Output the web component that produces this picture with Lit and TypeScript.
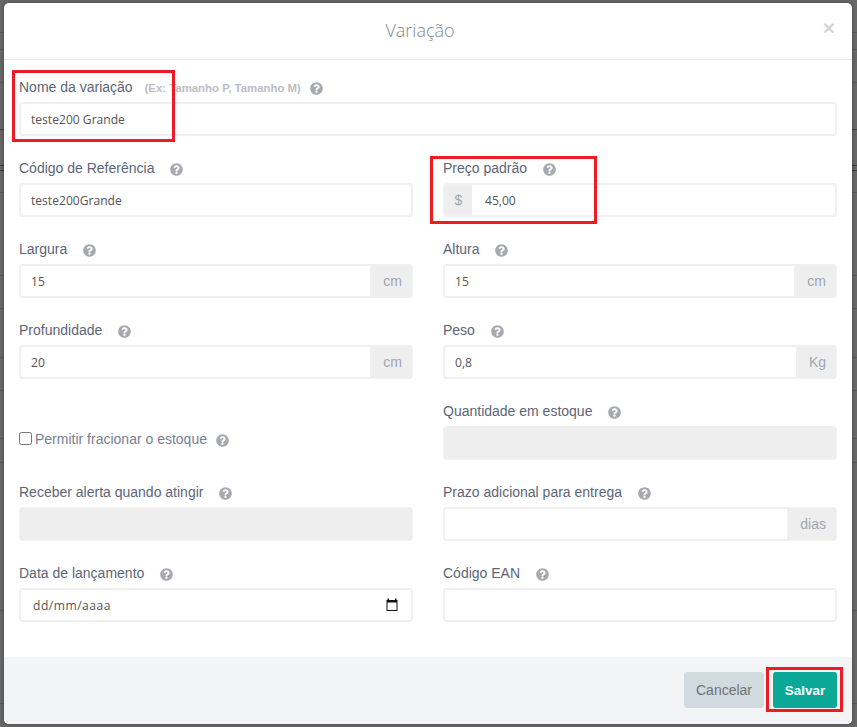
import { LitElement, css, html, svg } from "lit";
import { customElement } from "lit/decorators.js";

const help = html`<svg class="help" viewBox="0 0 512 512">
	${svg`<path fill="currentColor" d="M504 256c0 136.997-111.043 248-248 248S8 392.997 8 256C8 119.083 119.043 8 256 8s248 111.083 248 248zM262.655 90c-54.497 0-89.255 22.957-116.549 63.758-3.536 5.286-2.353 12.415 2.715 16.258l34.699 26.31c5.205 3.947 12.621 3.008 16.665-2.122 17.864-22.658 30.113-35.797 57.303-35.797 20.429 0 45.698 13.148 45.698 32.958 0 14.976-12.363 22.667-32.534 33.976C247.128 238.528 216 254.941 216 296v4c0 6.627 5.373 12 12 12h56c6.627 0 12-5.373 12-12v-1.333c0-28.462 83.186-29.647 83.186-106.667 0-58.002-60.165-102-116.531-102zM256 338c-25.365 0-46 20.635-46 46 0 25.364 20.635 46 46 46s46-20.636 46-46c0-25.365-20.635-46-46-46z"/>`}
</svg>`;

// rows of the page behind the modal, they show in the strips at both sides
const pageLines = [32, 49, 82, 192, 275, 308, 357, 390, 438, 462, 610, 703];
const pageDarkLines = [129, 165, 170];

const layer = (color: string, y: number) => `linear-gradient(${color}, ${color}) 0 ${y}px / 100% 1px no-repeat`;
const backdropBackground = [
	...pageLines.map(y => layer("#595959", y)),
	...pageDarkLines.map(y => layer("#404040", y)),
].join(", ");

@customElement("app-root")
export class AppRoot extends LitElement {

	field(label: string, value: string, opts: { suffix?: string, prefix?: string, disabled?: boolean } = {}) {
		return html`
			<div class="field">
				<label>${label} ${help}</label>
				<div class="group">
					${opts.prefix ? html`<span class="addon left">${opts.prefix}</span>` : ""}
					<input class="control" .value=${value} ?disabled=${opts.disabled} />
					${opts.suffix ? html`<span class="addon right">${opts.suffix}</span>` : ""}
				</div>
			</div>
		`
	}

	render() {
		return html`
			<div class="backdrop" style="background: ${backdropBackground}, #686868">
				<div class="modal">
					<header>
						<h4>Variação</h4>
						<span class="close">×</span>
					</header>
					<div class="body">
						<div class="field full">
							<label>Nome da variação <small>(Ex: Tamanho P, Tamanho M)</small> ${help}</label>
							<div class="group"><input class="control" value="teste200 Grande" /></div>
						</div>
						${this.field("Código de Referência", "teste200Grande")}
						${this.field("Preço padrão", "45,00", { prefix: "$" })}
						${this.field("Largura", "15", { suffix: "cm" })}
						${this.field("Altura", "15", { suffix: "cm" })}
						${this.field("Profundidade", "20", { suffix: "cm" })}
						${this.field("Peso", "0,8", { suffix: "Kg" })}
						<div class="check">
							<input type="checkbox" />
							<span>Permitir fracionar o estoque</span>
							${help}
						</div>
						${this.field("Quantidade em estoque", "", { disabled: true })}
						${this.field("Receber alerta quando atingir", "", { disabled: true })}
						${this.field("Prazo adicional para entrega", "", { suffix: "dias" })}
						<div class="field">
							<label>Data de lançamento ${help}</label>
							<div class="control date">
								<span>dd/mm/aaaa</span>
								<svg viewBox="0 0 14 14" width="14" height="14">
									<path fill="#111" d="M2.5 0.5h1.5v1.5h6v-1.5h1.5v1.5h1v11h-11v-11h1zM2.5 4.5v7.5h9v-7.5z" />
								</svg>
							</div>
						</div>
						${this.field("Código EAN", "")}
					</div>
					<footer>
						<button class="cancel">Cancelar</button>
						<button class="save">Salvar</button>
					</footer>
				</div>
				<div class="mark one"></div>
				<div class="mark two"></div>
				<div class="mark three"></div>
			</div>
		`
	}

	static styles = css`
		:host {
			display: block;
			font-family: "Liberation Sans", Arial, sans-serif;
		}
		* {
			box-sizing: border-box;
		}
		.backdrop {
			position: relative;
			width: 857px;
			height: 727px;
			overflow: hidden;
			padding: 3px 5px 3px 4px;
		}
		.modal {
			height: 721px;
			background-color: #fff;
			border-radius: 5px;
			overflow: hidden;
			display: flex;
			flex-direction: column;
			box-shadow: 0 0 4px rgba(0, 0, 0, 0.35);
		}
		header {
			position: relative;
			height: 57px;
			flex: none;
			border-bottom: 1px solid #e7e7e7;
			display: flex;
			align-items: center;
			justify-content: center;
			padding: 0 16px 2px 0;
		}
		h4 {
			margin: 0;
			font: 300 18px "Open Sans", sans-serif;
			color: #85888a;
		}
		.close {
			position: absolute;
			right: 17px;
			top: 13px;
			font: 700 21px "Liberation Sans", Arial, sans-serif;
			color: #d4d4d4;
		}
		.body {
			flex: 1;
			display: grid;
			grid-template-columns: 394px 394px;
			column-gap: 30px;
			grid-auto-rows: 81px;
			padding: 17px 15px 0;
		}
		.full {
			grid-column: 1 / -1;
		}
		.field {
			display: flex;
			flex-direction: column;
			height: 60px;
		}
		label {
			height: 25px;
			flex: none;
			font-size: 14px;
			line-height: 20px;
			color: #5c6577;
			white-space: nowrap;
		}
		small {
			font-size: 11.4px;
			font-weight: 700;
			color: #bbbdc4;
			margin-left: 8px;
		}
		.help {
			width: 13px;
			height: 13px;
			margin-left: 12px;
			vertical-align: -3px;
			color: #a7a9b1;
		}
		small + .help {
			margin-left: 5px;
		}
		.group {
			display: flex;
			height: 34px;
		}
		.control {
			flex: 1;
			min-width: 0;
			width: 100%;
			height: 34px;
			padding: 0 10px;
			border: 2px solid #eef0f1;
			border-radius: 4px;
			background-color: #fff;
			font: 12.1px "Open Sans", sans-serif;
			color: #555;
			outline: none;
		}
		.control:disabled {
			background-color: #eee;
		}
		.addon {
			flex: none;
			display: flex;
			align-items: center;
			justify-content: center;
			background-color: #eee;
			border: 2px solid #eef0f1;
			font-size: 14px;
			color: #a0a6b2;
		}
		.addon.left {
			width: 29px;
			border-radius: 4px 0 0 4px;
			border-right: 0;
		}
		.addon.left + .control {
			border-radius: 0 4px 4px 0;
			border-left: 0;
			padding-left: 13px;
		}
		.addon.right {
			padding: 0 9px 0 11px;
			border-radius: 0 4px 4px 0;
			border-left: 0;
		}
		.control:has(+ .addon.right) {
			border-radius: 4px 0 0 4px;
		}
		.date {
			display: flex;
			align-items: center;
			justify-content: space-between;
			padding: 0 12px;
			letter-spacing: 0.5px;
			flex: none;
		}
		.check {
			height: 34px;
			margin-top: 21px;
			display: flex;
			align-items: center;
			font-size: 14px;
			color: #78808f;
		}
		.check input {
			width: 13px;
			height: 13px;
			margin: 0 3px 2px 0;
		}
		.check .help {
			margin-left: 9px;
			margin-top: 3px;
		}
		footer {
			height: 67px;
			flex: none;
			background-color: #f3f4f6;
			display: flex;
			justify-content: flex-end;
			align-items: flex-start;
			gap: 9px;
			padding: 15px 15px 0 0;
		}
		button {
			height: 36px;
			border: 0;
			border-radius: 3px;
			font: 14px "Liberation Sans", Arial, sans-serif;
		}
		.cancel {
			width: 80px;
			background-color: #d1dade;
			color: #6f7275;
		}
		.save {
			width: 64px;
			background-color: #0ba797;
			color: #fff;
			font-weight: 700;
			font-size: 13.5px;
		}
		.mark {
			position: absolute;
			border: 3px solid #ed1c24;
		}
		.one {
			left: 12px;
			top: 70px;
			width: 163px;
			height: 72px;
		}
		.two {
			left: 430px;
			top: 156px;
			width: 167px;
			height: 68px;
		}
		.three {
			left: 766px;
			top: 667px;
			width: 77px;
			height: 45px;
		}
	`;
}
